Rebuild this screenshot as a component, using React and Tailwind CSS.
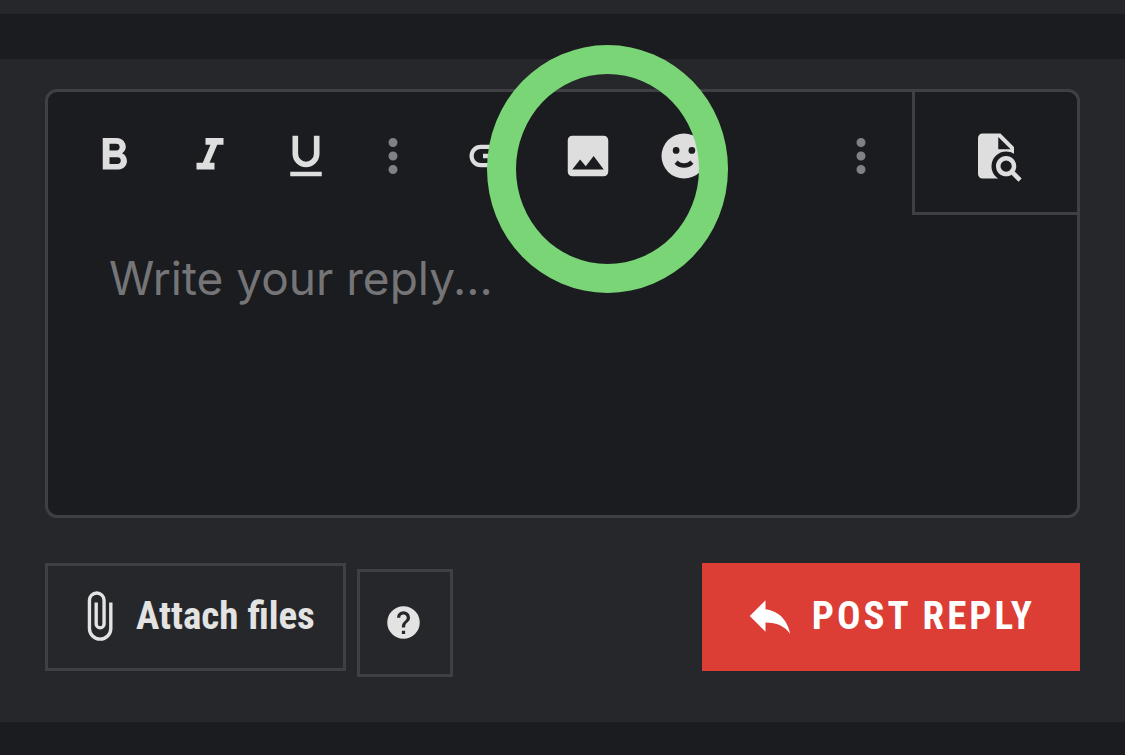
const ICONS = {
  bold: 'M13.5,15.5H10V12.5H13.5A1.5,1.5 0 0,1 15,14A1.5,1.5 0 0,1 13.5,15.5M10,6.5H13A1.5,1.5 0 0,1 14.5,8A1.5,1.5 0 0,1 13,9.5H10M15.6,10.79C16.57,10.11 17.25,9 17.25,8C17.25,5.74 15.5,4 13.25,4H7V18H14.04C16.14,18 17.75,16.3 17.75,14.21C17.75,12.69 16.89,11.39 15.6,10.79Z',
  italic: 'M10,4V7H12.21L8.79,15H6V18H14V15H11.79L15.21,7H18V4H10Z',
  underline: 'M5,21H19V19H5V21M12,17A6,6 0 0,0 18,11V3H15.5V11A3.5,3.5 0 0,1 12,14.5A3.5,3.5 0 0,1 8.5,11V3H6V11A6,6 0 0,0 12,17Z',
  dots: 'M12,16A2,2 0 0,1 14,18A2,2 0 0,1 12,20A2,2 0 0,1 10,18A2,2 0 0,1 12,16M12,10A2,2 0 0,1 14,12A2,2 0 0,1 12,14A2,2 0 0,1 10,12A2,2 0 0,1 12,10M12,4A2,2 0 0,1 14,6A2,2 0 0,1 12,8A2,2 0 0,1 10,6A2,2 0 0,1 12,4Z',
  link: 'M3.9,12C3.9,10.29 5.29,8.9 7,8.9H11V7H7A5,5 0 0,0 2,12A5,5 0 0,0 7,17H11V15.1H7C5.29,15.1 3.9,13.71 3.9,12M8,13H16V11H8V13M17,7H13V8.9H17C18.71,8.9 20.1,10.29 20.1,12C20.1,13.71 18.71,15.1 17,15.1H13V17H17A5,5 0 0,0 22,12A5,5 0 0,0 17,7Z',
  image: 'M8.5,13.5L11,16.5L14.5,12L19,18H5M21,19V5C21,3.89 20.1,3 19,3H5A2,2 0 0,0 3,5V19A2,2 0 0,0 5,21H19A2,2 0 0,0 21,19Z',
  smile: 'M12,2A10,10 0 0,0 2,12A10,10 0 0,0 12,22A10,10 0 0,0 22,12A10,10 0 0,0 12,2M8.5,8A1.5,1.5 0 0,1 10,9.5A1.5,1.5 0 0,1 8.5,11A1.5,1.5 0 0,1 7,9.5A1.5,1.5 0 0,1 8.5,8M15.5,8A1.5,1.5 0 0,1 17,9.5A1.5,1.5 0 0,1 15.5,11A1.5,1.5 0 0,1 14,9.5A1.5,1.5 0 0,1 15.5,8M12,17.23C10.25,17.23 8.71,16.5 7.81,15.42L9.23,14C9.68,14.72 10.75,15.23 12,15.23C13.25,15.23 14.32,14.72 14.77,14L16.19,15.42C15.29,16.5 13.75,17.23 12,17.23Z',
  preview: 'M13,9H18.5L13,3.5V9M6,2H14L20,8V11C18.95,10.36 17.76,10 16.5,10A6.5,6.5 0 0,0 10,16.5C10,18.81 11.21,20.85 13.03,22H6C4.89,22 4,21.1 4,20V4C4,2.89 4.89,2 6,2M20.31,18.9L23.39,22L22,23.39L18.88,20.32C18.19,20.75 17.37,21 16.5,21C14,21 12,19 12,16.5C12,14 14,12 16.5,12C19,12 21,14 21,16.5C21,17.38 20.75,18.21 20.31,18.9M16.5,19A2.5,2.5 0 0,0 19,16.5A2.5,2.5 0 0,0 16.5,14A2.5,2.5 0 0,0 14,16.5A2.5,2.5 0 0,0 16.5,19Z',
  paperclip: 'M16.5,6V17.5A4,4 0 0,1 12.5,21.5A4,4 0 0,1 8.5,17.5V5A2.5,2.5 0 0,1 11,2.5A2.5,2.5 0 0,1 13.5,5V15.5A1,1 0 0,1 12.5,16.5A1,1 0 0,1 11.5,15.5V6H10V15.5A2.5,2.5 0 0,0 12.5,18A2.5,2.5 0 0,0 15,15.5V5A4,4 0 0,0 11,1A4,4 0 0,0 7,5V17.5A5.5,5.5 0 0,0 12.5,23A5.5,5.5 0 0,0 18,17.5V6H16.5Z',
  help: 'M15.07,11.25L14.17,12.17C13.45,12.89 13,13.5 13,15H11V14.5C11,13.39 11.45,12.39 12.17,11.67L13.41,10.41C13.78,10.05 14,9.55 14,9C14,7.89 13.1,7 12,7A2,2 0 0,0 10,9H8A4,4 0 0,1 12,5A4,4 0 0,1 16,9C16,9.88 15.64,10.67 15.07,11.25M13,19H11V17H13M12,2A10,10 0 0,0 2,12A10,10 0 0,0 12,22A10,10 0 0,0 22,12A10,10 0 0,0 12,2Z',
  reply: 'M10,9V5L3,12L10,19V14.9C15,14.9 18.5,16.5 21,20C20,15 17,10 10,9Z',
};

function Icon({ name, className = 'size-[54px]' }) {
  return (
    <svg viewBox="0 0 24 24" fill="currentColor" fillRule="evenodd" aria-hidden="true" className={`shrink-0 ${className}`}>
      <path d={ICONS[name]} />
    </svg>
  );
}

function Tool({ name, label }) {
  return (
    <button type="button" aria-label={label} className="flex h-full w-24 items-center justify-center">
      <Icon name={name} />
    </button>
  );
}

function More({ label, className = '' }) {
  return (
    <button type="button" aria-label={label} className={`mr-3 flex h-full w-[78px] items-center justify-center text-[#808184] ${className}`}>
      <Icon name="dots" />
    </button>
  );
}

export default function App() {
  return (
    <div className="flex min-h-screen flex-col bg-[#1b1c1f] text-[#dedede]">
      <div className="h-[14px] bg-[#26272a]" />

      <form className="mt-[45px] bg-[#26272a] px-[45px] pt-[30px] pb-[45px]" onSubmit={(e) => e.preventDefault()}>
        <div className="relative rounded-xl border-3 border-[#3f4044] bg-[#1b1c1f]">
          <div className="flex h-32 pl-[18px]">
            <Tool name="bold" label="Bold" />
            <Tool name="italic" label="Italic" />
            <Tool name="underline" label="Underline" />
            <More label="More text options" />
            <Tool name="link" label="Insert link" />
            <Tool name="image" label="Insert image" />
            <Tool name="smile" label="Smilies" />
            <More label="More options" className="ml-auto" />
            <button
              type="button"
              aria-label="Preview"
              className="flex h-[123px] w-[165px] items-center justify-center border-b-3 border-l-3 border-[#3f4044] pt-2"
            >
              <Icon name="preview" />
            </button>
          </div>

          <textarea
            aria-label="Reply"
            placeholder="Write your reply..."
            className="block h-[295px] w-full resize-none px-[61px] pt-[30px] font-[Inter,sans-serif] text-[46px]/[56px] outline-none placeholder:text-[#757578]"
          />

          {/* highlight around the insert image tool */}
          <div className="pointer-events-none absolute -top-[47px] left-[439px] h-[248px] w-[241px] rounded-[50%] border-[29px] border-[#7ad577]" />
        </div>

        <div className="mt-[45px] flex items-start font-['Roboto_Condensed','Liberation_Sans_Narrow',Roboto,sans-serif] text-[39px]/[48px] font-bold">
          <button type="button" className="flex h-[108px] items-center gap-[10px] border-3 border-[#3f4044] pr-7 pb-[2px] pl-6 text-[#e3e3e3]">
            <Icon name="paperclip" />
            Attach files
          </button>
          <button
            type="button"
            aria-label="Help"
            className="mt-[6px] ml-[11px] flex h-[108px] w-24 items-center justify-center border-3 border-[#3f4044] pr-[2px] pb-[2px] text-[#e3e3e3]"
          >
            <Icon name="help" className="size-[39px]" />
          </button>
          <button type="submit" className="ml-auto flex h-[108px] items-center gap-[15px] bg-[#dc3d34] pr-[45px] pb-[2px] pl-[41px] tracking-[3px] text-white uppercase">
            <Icon name="reply" />
            Post reply
          </button>
        </div>
      </form>
    </div>
  );
}
